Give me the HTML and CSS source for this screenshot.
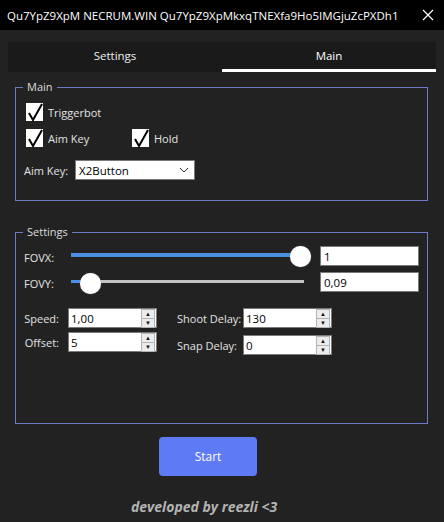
FILE: index.html
```html
<!DOCTYPE html>
<html lang="en">
<head>
    <meta charset="UTF-8">
    <title>NECRUM.WIN</title>
    <link rel="stylesheet" href="styles.css">
</head>
<body>
    <!-- Barra de título -->
    <div class="titlebar">
        <span class="title">Qu7YpZ9XpM NECRUM.WIN Qu7YpZ9XpMkxqTNEXfa9Ho5IMGjuZcPXDh1</span>
        <svg class="close" width="12" height="12" viewBox="0 0 12 12">
            <path d="M1 1 L11 11 M11 1 L1 11" stroke="#fff" stroke-width="1.2" fill="none"/>
        </svg>
    </div>

    <div class="window">
        <!-- Abas -->
        <div class="tabs">
            <div class="tab">Settings</div>
            <div class="tab active">Main</div>
        </div>

        <!-- Grupo Main -->
        <fieldset class="group group-main">
            <legend>Main</legend>
            <div class="check-row first">
                <label class="check">
                    <span class="box"><svg width="18" height="19" viewBox="0 0 18 19"><polyline points="3,10 7,17 16,1" fill="none" stroke="#000" stroke-width="2"/></svg></span>
                    Triggerbot
                </label>
            </div>
            <div class="check-row">
                <label class="check">
                    <span class="box"><svg width="18" height="19" viewBox="0 0 18 19"><polyline points="3,10 7,17 16,1" fill="none" stroke="#000" stroke-width="2"/></svg></span>
                    Aim Key
                </label>
                <label class="check hold">
                    <span class="box"><svg width="18" height="19" viewBox="0 0 18 19"><polyline points="3,10 7,17 16,1" fill="none" stroke="#000" stroke-width="2"/></svg></span>
                    Hold
                </label>
            </div>
            <div class="select-row">
                <span class="lbl">Aim Key:</span>
                <div class="select">
                    <span>X2Button</span>
                    <svg width="10" height="6" viewBox="0 0 10 6"><path d="M1 1 L5 5 L9 1" stroke="#333" stroke-width="1" fill="none"/></svg>
                </div>
            </div>
        </fieldset>

        <!-- Grupo Settings -->
        <fieldset class="group group-settings">
            <legend>Settings</legend>
            <div class="slider-row first">
                <span class="lbl">FOVX:</span>
                <div class="slider">
                    <div class="fill" style="width: 229px"></div>
                    <div class="thumb" style="left: 229px"></div>
                </div>
                <div class="textbox">1</div>
            </div>
            <div class="slider-row second">
                <span class="lbl">FOVY:</span>
                <div class="slider">
                    <div class="fill" style="width: 19px"></div>
                    <div class="thumb" style="left: 19px"></div>
                </div>
                <div class="textbox">0,09</div>
            </div>

            <div class="spin-grid">
                <div class="spin-col left">
                    <div class="spin-row">
                        <span class="lbl">Speed:</span>
                        <div class="spin"><span>1,00</span><div class="arrows"><span>&#9650;</span><span>&#9660;</span></div></div>
                    </div>
                    <div class="spin-row">
                        <span class="lbl">Offset:</span>
                        <div class="spin"><span>5</span><div class="arrows"><span>&#9650;</span><span>&#9660;</span></div></div>
                    </div>
                </div>
                <div class="spin-col right">
                    <div class="spin-row">
                        <span class="lbl">Shoot Delay:</span>
                        <div class="spin"><span>130</span><div class="arrows"><span>&#9650;</span><span>&#9660;</span></div></div>
                    </div>
                    <div class="spin-row">
                        <span class="lbl">Snap Delay:</span>
                        <div class="spin"><span>0</span><div class="arrows"><span>&#9650;</span><span>&#9660;</span></div></div>
                    </div>
                </div>
            </div>
        </fieldset>

        <button class="start">Start</button>
        <div class="footer">developed by reezli &lt;3</div>
    </div>
</body>
</html>
```

FILE: styles.css
```css
body {
    margin: 0;
    background-color: #222222;
    font-family: "Open Sans", Arial, sans-serif;
    color: #e2e2e2;
    width: 444px;
    height: 522px;
    overflow: hidden;
}

.titlebar {
    height: 30px;
    background-color: #000;
    display: flex;
    align-items: center;
    justify-content: space-between;
    padding: 0 10px 0 7px;
}

.title {
    font-size: 11.5px;
    color: #fff;
    white-space: nowrap;
}

.close {
    display: block;
}

.window {
    padding: 12px 8px 0;
}

/* Abas */
.tabs {
    display: flex;
    height: 30px;
    background-color: #1a1a1a;
}

.tab {
    flex: 1;
    display: flex;
    align-items: center;
    justify-content: center;
    font-size: 11.5px;
    color: #eee;
    box-sizing: border-box;
    padding-bottom: 3px;
}

.tab.active {
    color: #fff;
    border-bottom: 3px solid #fff;
    padding-bottom: 0;
}

/* Grupos */
.group {
    border: 1px solid #6c7bc4;
    margin: 8px 8px 0 7px;
    padding: 0 8px;
    min-width: 0;
}

.group legend {
    font-size: 11px;
    line-height: 14px;
    padding: 0 4px;
    margin-left: -1px;
    color: #ddd;
}

.group-main {
    padding-bottom: 20px;
}

.group-settings {
    margin-top: 24px;
    padding-bottom: 68px;
}

.check-row {
    display: flex;
    align-items: center;
    height: 18px;
    margin-top: 8px;
    padding-left: 2px;
}

.check-row.first {
    margin-top: 9px;
}

.check {
    display: flex;
    align-items: center;
    gap: 5px;
    font-size: 11px;
    width: 106px;
}

.box {
    width: 17px;
    height: 18px;
    background-color: #fff;
    display: block;
    overflow: visible;
}

.box svg {
    display: block;
}

.select-row {
    display: flex;
    align-items: center;
    margin-top: 13px;
    font-size: 11px;
}

.select-row .lbl {
    width: 51px;
}

.select {
    width: 120px;
    height: 20px;
    background-color: #fff;
    color: #000;
    box-sizing: border-box;
    border: 1px solid #7a7a7a;
    display: flex;
    align-items: center;
    justify-content: space-between;
    padding: 0 5px 0 3px;
    font-size: 11.5px;
}

/* Sliders */
.slider-row {
    display: flex;
    align-items: center;
    height: 20px;
    margin-top: 6px;
    font-size: 11px;
}

.slider-row.first {
    margin-top: 7px;
}

.slider-row .lbl {
    width: 47px;
    padding-top: 2px;
}

.slider {
    position: relative;
    width: 233px;
    height: 4px;
    background-color: #c3c3c3;
    margin-right: 16px;
}

.slider-row.first .slider {
    margin-top: -3px;
}

.slider-row.second .slider {
    margin-top: -1px;
    height: 3px;
}

.slider .fill {
    height: 100%;
    background-color: #4a8fe0;
}

.slider .thumb {
    position: absolute;
    top: 50%;
    width: 21px;
    height: 21px;
    margin: -9px 0 0 -10px;
    border-radius: 50%;
    background-color: #fff;
    box-shadow: 0 0 1px #999;
}

.textbox {
    width: 99px;
    height: 20px;
    box-sizing: border-box;
    background-color: #fff;
    border: 1px solid #7a7a7a;
    color: #000;
    font-size: 11.5px;
    padding-left: 3px;
    display: flex;
    align-items: center;
}

/* Campos numéricos */
.spin-grid {
    display: flex;
    gap: 20px;
    margin-top: 16px;
}

.spin-col {
    display: flex;
    flex-direction: column;
    gap: 4px;
}

.spin-col.right {
    gap: 7px;
}

.spin-row {
    display: flex;
    align-items: center;
    font-size: 11px;
    white-space: nowrap;
}

.spin-col.left .lbl {
    width: 35px;
    text-align: right;
    margin-right: 9px;
}

.spin-col.right .lbl {
    width: 66px;
}

.spin {
    width: 89px;
    height: 20px;
    box-sizing: border-box;
    background-color: #fff;
    border: 1px solid #7a7a7a;
    color: #000;
    font-size: 11.5px;
    display: flex;
    align-items: center;
    justify-content: space-between;
    padding-left: 2px;
}

.arrows {
    display: flex;
    flex-direction: column;
    width: 14px;
    height: 18px;
    margin-right: 1px;
}

.arrows span {
    flex: 1;
    display: flex;
    align-items: center;
    justify-content: center;
    font-size: 6px;
    color: #111;
    background-color: #ececec;
    border: 1px solid #b4b4b4;
}

.arrows span + span {
    border-top: none;
}

/* Botão iniciar */
.start {
    display: block;
    margin: 13px 0 0 151px;
    width: 98px;
    height: 39px;
    background-color: #5f7af5;
    color: #fff;
    border: none;
    border-radius: 4px;
    font-family: "Open Sans", Arial, sans-serif;
    font-size: 12px;
}

.footer {
    margin-top: 22px;
    padding-left: 123px;
    font-size: 14px;
    line-height: 18px;
    font-weight: bold;
    font-style: italic;
    color: #b3b3b3;
}
```
